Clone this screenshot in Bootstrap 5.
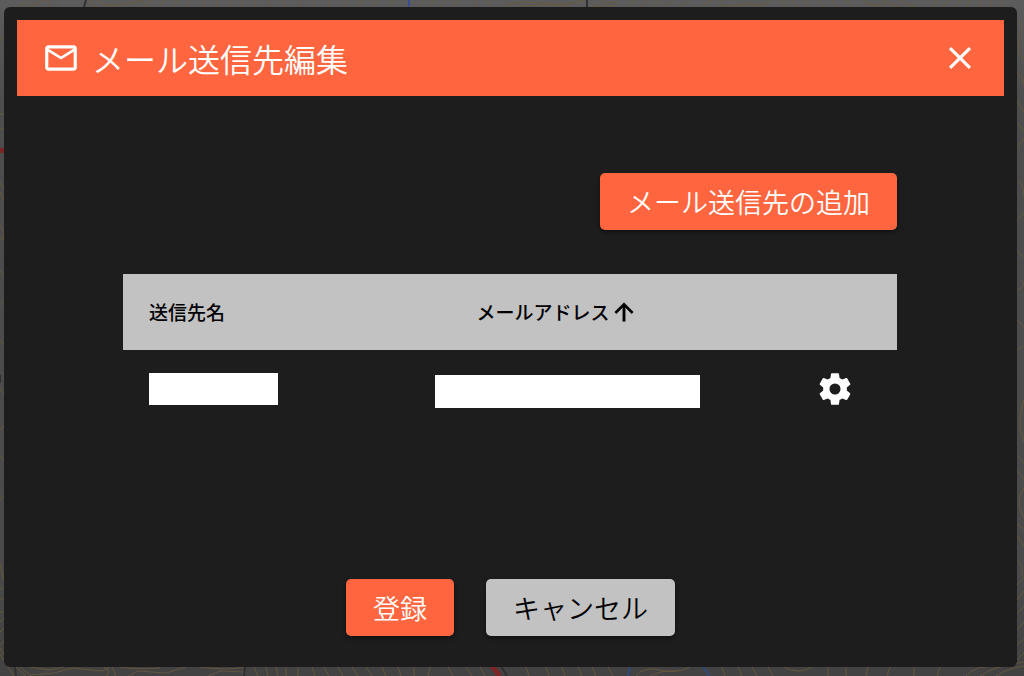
<!DOCTYPE html>
<html lang="ja">
<head>
<meta charset="utf-8">
<meta name="viewport" content="width=device-width, initial-scale=1">
<title>メール送信先編集</title>
<link href="https://cdn.jsdelivr.net/npm/bootstrap@5.3.0/dist/css/bootstrap.min.css" rel="stylesheet">
<style>
body { background: linear-gradient(#5c5c5c, #4d4d4d 15%, #4a4a4a 85%, #424242); font-family: "Noto Sans CJK JP", sans-serif; }
.map-layer { z-index: -1; }
.dialog-wrap { padding: 7px 7px 9px 4px; }
.dialog-panel { background: #1d1d1d; border-radius: 6px; padding: 13px; }
.dialog-bar { background: #ff6640; height: 76px; padding: 0 25px; gap: 12px; }
.dialog-title { font-size: 32px; line-height: 40px; font-weight: 350; }
.close-btn { line-height: 0; }
.dialog-body { padding: 77px 107px 0 106px; }
.action-btn { --bs-btn-padding-x: 27px; --bs-btn-padding-y: 8px; --bs-btn-font-size: 27px; --bs-btn-line-height: 41px; --bs-btn-border-width: 0; --bs-btn-border-radius: 5px; font-weight: 350; box-shadow: 0 2px 4px rgba(0, 0, 0, .45); }
.action-main { --bs-btn-bg: #ff6640; --bs-btn-color: #fff; --bs-btn-hover-bg: #f05a35; --bs-btn-hover-color: #fff; }
.action-sub { --bs-btn-bg: #c2c2c2; --bs-btn-color: #000; --bs-btn-hover-bg: #b2b2b2; }
.dest-table { table-layout: fixed; margin-top: 44px; }
.dest-table th { background: #c2c2c2; color: #000; height: 76px; font-size: 19px; line-height: 24px; font-weight: 500; padding: 0 0 0 26px; }
.dest-table th.mail-col { padding-left: 44px; }
.dest-table td { height: 78px; padding: 0; }
.dest-table td:first-child { padding-left: 26px; }
.dest-table td.mail-col { padding-left: 2px; padding-top: 4px; }
.blank-name { width: 129px; height: 32px; background: #fff; }
.blank-mail { width: 265px; height: 33px; background: #fff; }
.dialog-foot { gap: 32px; padding-bottom: 18px; }
</style>
</head>
<body>
<svg class="map-layer position-fixed top-0 start-0 w-100 h-100" viewBox="0 0 1024 676" preserveAspectRatio="none" aria-hidden="true">
  <g fill="none" stroke="#6b5a3c" stroke-width="1" stroke-opacity=".8">
    <path d="M0 42Q14 22 18 7M18 7L30 0M28 7L44 0M48 7Q52 2 46 0M98 0Q104 8 120 5T144 0M90 0Q92 8 104 8M152 0Q146 5 142 8M166 0l-8 8M178 0l-5 8M190 0l-5 8M206 0l-3 8M218 0l-2 8M230 0v8M242 0l1 8M254 0l2 8M268 0l3 8M282 0l4 8M298 0l3 8M314 0l1 8M330 0l-2 8M348 0l-5 8M362 0l-5 8M378 0l-7 8M394 0l-4 8"/>
    <path d="M424 0l-6 8M434 0l-5 8M446 0l-7 8M458 0l-6 8M474 0l3 8M486 0l7 8M500 8Q514 0 540 3T586 0M512 8Q540 3 570 6M592 6h24M600 0q8 5 18 1M628 8l7-8M640 8l7-8M652 8l8-8M664 8l10-8M680 8l10-8M700 8l12-8M722 0q-8 7 8 6t18-3q14 6 22-3M780 0l8 8M792 0l7 8M804 0l7 8M818 0l7 8M832 0l7 8M846 0l8 8M862 0q8 7 24 5M882 0q18 10 28 8M900 0q7 6 18 8M930 8l8-8M942 8l7-8M954 8l6-8M966 8l4-8M978 8l3-8M990 8l2-8M1002 8V0"/>
    <path d="M0 114h4M0 129h4M0 182l4 7M0 192l4 9M0 225q5 6 4 14M0 238l4 2M0 270l4 6M0 305l4-4M0 340l4 5M0 388l4 6M0 430l4-5M0 455l4 6M0 500l4-5M0 563l4 18M0 590l4-3M0 600l4-2M0 612h4M0 622l4-3M0 632l4-4M0 645l4-4M0 648q8 14 16 19l10 9M0 654q7 12 14 22"/>
    <path d="M20 667l10 8 24-2 18-5 30 3 8-4M30 667l20 3 14-3M104 667q8 4 2 9M112 667l4 9M120 667q18 3 40 1M128 676l10-5 28 2 20-6M200 667q28 4 44 0M208 676l12-5 24 1M254 667l4 9M266 667l2 9M276 667l2 9M286 667v9M298 667v9M312 667l3 9M324 667l5 9M338 667l5 9M352 667l6 9M366 667l6 9M382 667l4 9M398 667l3 9M414 667v9M430 667l-2 9M448 667l5 9M466 667l6 9M480 667l5 9"/>
    <path d="M526 667l3 9M546 667l3 9M562 667l3 9M578 667l4 9M592 667l4 9M608 667l5 9M636 676q8-10 24-6t30-3M650 676q10-6 28-5M722 667l3 9M738 667l4 9M752 667l5 9M768 667l5 9M784 667q14 8 28 0M828 667v9M846 667v9M868 667l-2 9M890 667l-3 9M914 667v9M940 667l-3 9M966 676q10-12 34-9M980 676q14-10 44-14M996 676q12-8 28-10M1017 660l7-7"/>
    <path d="M1017 20q8 4 3 18t4 22M1017 72q8 8 7 14M1017 100l7 12M1017 122l7 9M1017 148l7-10M1017 180q8 6 7 17M1017 220l7-7M1017 250l7 8M1017 290q7-2 7-9M1017 320l7 7M1017 350l7-5M1024 400q-8 22 0 42M1017 455l7 8M1017 470l7 9M1024 488q-10 14 0 30M1017 524l7 5M1017 536l7 10M1017 562q6 1 5 13M1017 585l7-8M1017 600l7-9M1017 614l7-8M1017 630l7-8M1017 645l7-6"/>
  </g>
  <path d="M409 0v8" stroke="#3a4d9a" stroke-width="2"/>
  <path d="M630 667l-2 9M703 667l7 9" stroke="#304a80" stroke-width="2"/>
  <path d="M491 665l9 11M0 150l5 1" stroke="#7c2426" stroke-width="5"/>
  <path d="M501 666l6 10M86 0l-2 7M587 0v7M245 667l-1 9M15 667l1 9M0 375v8" stroke="#303030" stroke-width="2"/>
</svg>

<div class="dialog-wrap d-flex min-vh-100">
  <main class="dialog-panel flex-grow-1 d-flex flex-column" role="dialog" aria-labelledby="dlgTitle">
    <header class="dialog-bar d-flex align-items-center text-white">
      <svg width="38" height="38" viewBox="0 0 24 24" fill="#fff" aria-hidden="true"><path d="M22 6c0-1.100-.9-2-2-2H4c-1.100 0-2 .9-2 2v12c0 1.100.9 2 2 2h16c1.100 0 2-.9 2-2V6zm-2 0l-8 5-8-5h16zm0 12H4V8l8 5 8-5v10z"/></svg>
      <h1 class="dialog-title mb-0 flex-grow-1" id="dlgTitle">メール送信先編集</h1>
      <button type="button" class="close-btn btn p-0 border-0" aria-label="閉じる">
        <svg width="38" height="38" viewBox="0 0 24 24" fill="#fff" aria-hidden="true"><path d="M19 6.410L17.590 5 12 10.590 6.410 5 5 6.410 10.590 12 5 17.590 6.410 19 12 13.410 17.590 19 19 17.590 13.410 12z"/></svg>
      </button>
    </header>
    <section class="dialog-body">
      <div class="text-end">
        <button type="button" class="btn action-btn action-main">メール送信先の追加</button>
      </div>
      <table class="dest-table w-100">
        <colgroup><col style="width:40%"><col style="width:44%"><col style="width:16%"></colgroup>
        <thead>
          <tr>
            <th scope="col">送信先名</th>
            <th scope="col" class="mail-col" aria-sort="ascending"><span class="d-flex align-items-center">メールアドレス<svg width="28" height="28" viewBox="0 0 24 24" stroke="#000" stroke-width=".4" aria-hidden="true"><path d="M4 12l1.410 1.410L11 7.830V20h2V7.830l5.580 5.590L20 12l-8-8-8 8z"/></svg></span></th>
            <th scope="col"></th>
          </tr>
        </thead>
        <tbody>
          <tr>
            <td><div class="blank-name"></div></td>
            <td class="mail-col"><div class="blank-mail"></div></td>
            <td class="text-center">
              <button type="button" class="close-btn btn p-0 border-0" aria-label="設定">
                <svg width="38" height="38" viewBox="0 0 24 24" fill="#fff" aria-hidden="true"><path d="M12 15.500A3.500 3.500 0 0 1 8.500 12 3.500 3.500 0 0 1 12 8.500a3.500 3.500 0 0 1 3.500 3.500 3.500 3.500 0 0 1-3.500 3.500m7.430-2.530c.04-.32.07-.64.07-.97s-.03-.66-.07-1l2.110-1.630c.19-.15.24-.42.12-.64l-2-3.460c-.12-.22-.39-.31-.61-.22l-2.490 1c-.52-.39-1.060-.73-1.690-.98l-.37-2.650A.506.506 0 0 0 14 2h-4c-.25 0-.46.18-.5.42l-.37 2.650c-.63.25-1.170.59-1.690.98l-2.490-1c-.22-.09-.49 0-.61.22l-2 3.460c-.13.22-.07.49.12.64L4.570 11c-.04.34-.07.67-.07 1s.03.65.07.97l-2.110 1.660c-.19.15-.25.42-.12.64l2 3.460c.12.22.39.3.61.22l2.490-1.010c.52.4 1.060.74 1.690.99l.37 2.650c.04.24.25.42.5.42h4c.25 0 .46-.18.5-.42l.37-2.650c.63-.26 1.170-.59 1.690-.99l2.490 1.010c.22.08.49 0 .61-.22l2-3.460c.12-.22.07-.49-.12-.64z"/></svg>
              </button>
            </td>
          </tr>
        </tbody>
      </table>
    </section>
    <footer class="dialog-foot mt-auto d-flex justify-content-center">
      <button type="button" class="btn action-btn action-main">登録</button>
      <button type="button" class="btn action-btn action-sub">キャンセル</button>
    </footer>
  </main>
</div>
<script src="https://cdn.jsdelivr.net/npm/bootstrap@5.3.0/dist/js/bootstrap.bundle.min.js"></script>
</body>
</html>
